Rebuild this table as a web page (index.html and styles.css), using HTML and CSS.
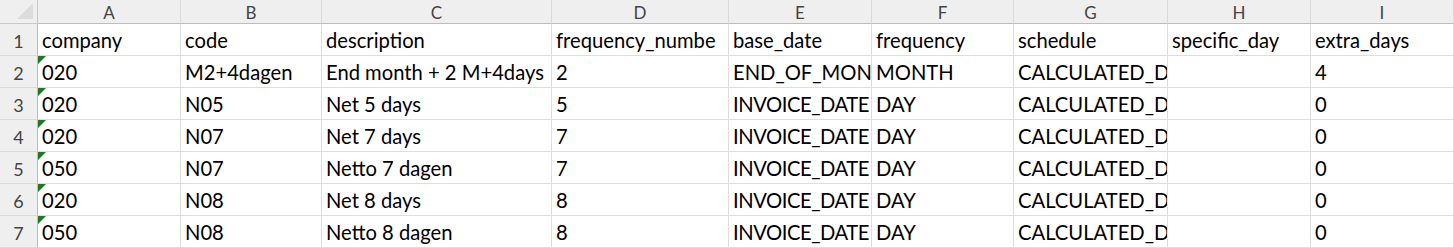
FILE: index.html
```html
<!DOCTYPE html>
<html>
<head>
<meta charset="utf-8">
<link rel="stylesheet" href="styles.css">
</head>
<body>
<div class="sheet">
  <div class="corner"><span class="tri"></span></div>
  <div class="ch">A</div><div class="ch">B</div><div class="ch">C</div><div class="ch">D</div><div class="ch">E</div><div class="ch">F</div><div class="ch">G</div><div class="ch">H</div><div class="ch">I</div>

  <div class="rh">1</div>
  <div class="c">company</div><div class="c">code</div><div class="c">description</div><div class="c">frequency_numbe</div><div class="c">base_date</div><div class="c">frequency</div><div class="c">schedule</div><div class="c">specific_day</div><div class="c">extra_days</div>

  <div class="rh">2</div>
  <div class="c flag">020</div><div class="c">M2+4dagen</div><div class="c">End month + 2 M+4days</div><div class="c">2</div><div class="c">END_OF_MON</div><div class="c">MONTH</div><div class="c">CALCULATED_D</div><div class="c"></div><div class="c">4</div>

  <div class="rh">3</div>
  <div class="c flag">020</div><div class="c">N05</div><div class="c">Net 5 days</div><div class="c">5</div><div class="c tight">INVOICE_DATE</div><div class="c">DAY</div><div class="c">CALCULATED_D</div><div class="c"></div><div class="c">0</div>

  <div class="rh">4</div>
  <div class="c flag">020</div><div class="c">N07</div><div class="c">Net 7 days</div><div class="c">7</div><div class="c tight">INVOICE_DATE</div><div class="c">DAY</div><div class="c">CALCULATED_D</div><div class="c"></div><div class="c">0</div>

  <div class="rh">5</div>
  <div class="c flag">050</div><div class="c">N07</div><div class="c">Netto 7 dagen</div><div class="c">7</div><div class="c tight">INVOICE_DATE</div><div class="c">DAY</div><div class="c">CALCULATED_D</div><div class="c"></div><div class="c">0</div>

  <div class="rh">6</div>
  <div class="c flag">020</div><div class="c">N08</div><div class="c">Net 8 days</div><div class="c">8</div><div class="c tight">INVOICE_DATE</div><div class="c">DAY</div><div class="c">CALCULATED_D</div><div class="c"></div><div class="c">0</div>

  <div class="rh">7</div>
  <div class="c flag">050</div><div class="c">N08</div><div class="c">Netto 8 dagen</div><div class="c">8</div><div class="c tight">INVOICE_DATE</div><div class="c">DAY</div><div class="c">CALCULATED_D</div><div class="c"></div><div class="c">0</div>
</div>
</body>
</html>
```
FILE: styles.css
```css
* { box-sizing: border-box; }
html, body { margin: 0; padding: 0; background: #fff; }
body { font-family: Lato, "Open Sans", sans-serif; }

.sheet {
  display: grid;
  grid-template-columns: 38px 143px 141px 230px 177px 143px 142px 154px 143px 143px;
  grid-template-rows: 24px repeat(7, 32px);
  width: 1454px;
  height: 248px;
  overflow: hidden;
}

.corner {
  position: relative;
  background: #efefef;
  border-right: 1px solid #c8c8c8;
  border-bottom: 1px solid #c8c8c8;
}
.corner .tri {
  position: absolute;
  right: 4px;
  bottom: 4px;
  width: 0;
  height: 0;
  border-left: 16px solid transparent;
  border-bottom: 16px solid #dcdcdc;
}

.ch {
  background: #efefef;
  border-right: 1px solid #dadada;
  border-bottom: 1px solid #bdbdbd;
  color: #444;
  font-size: 17px;
  display: flex;
  align-items: center;
  justify-content: center;
  padding-top: 1px;
}

.rh {
  background: #efefef;
  border-right: 1px solid #bdbdbd;
  border-bottom: 1px solid #dadada;
  color: #444;
  font-size: 18px;
  display: flex;
  align-items: flex-end;
  justify-content: center;
  padding-bottom: 3px;
}

.c {
  position: relative;
  border-right: 1px solid #dedede;
  border-bottom: 1px solid #dedede;
  color: #000;
  font-size: 20.2px;
  white-space: nowrap;
  overflow: hidden;
  padding: 0 0 3px 4px;
  display: flex;
  align-items: flex-end;
}

.tight { letter-spacing: -0.45px; }

.flag::before {
  content: "";
  position: absolute;
  left: 0;
  top: 0;
  width: 0;
  height: 0;
  border-top: 8px solid #1e7a1e;
  border-right: 8px solid transparent;
}
```
